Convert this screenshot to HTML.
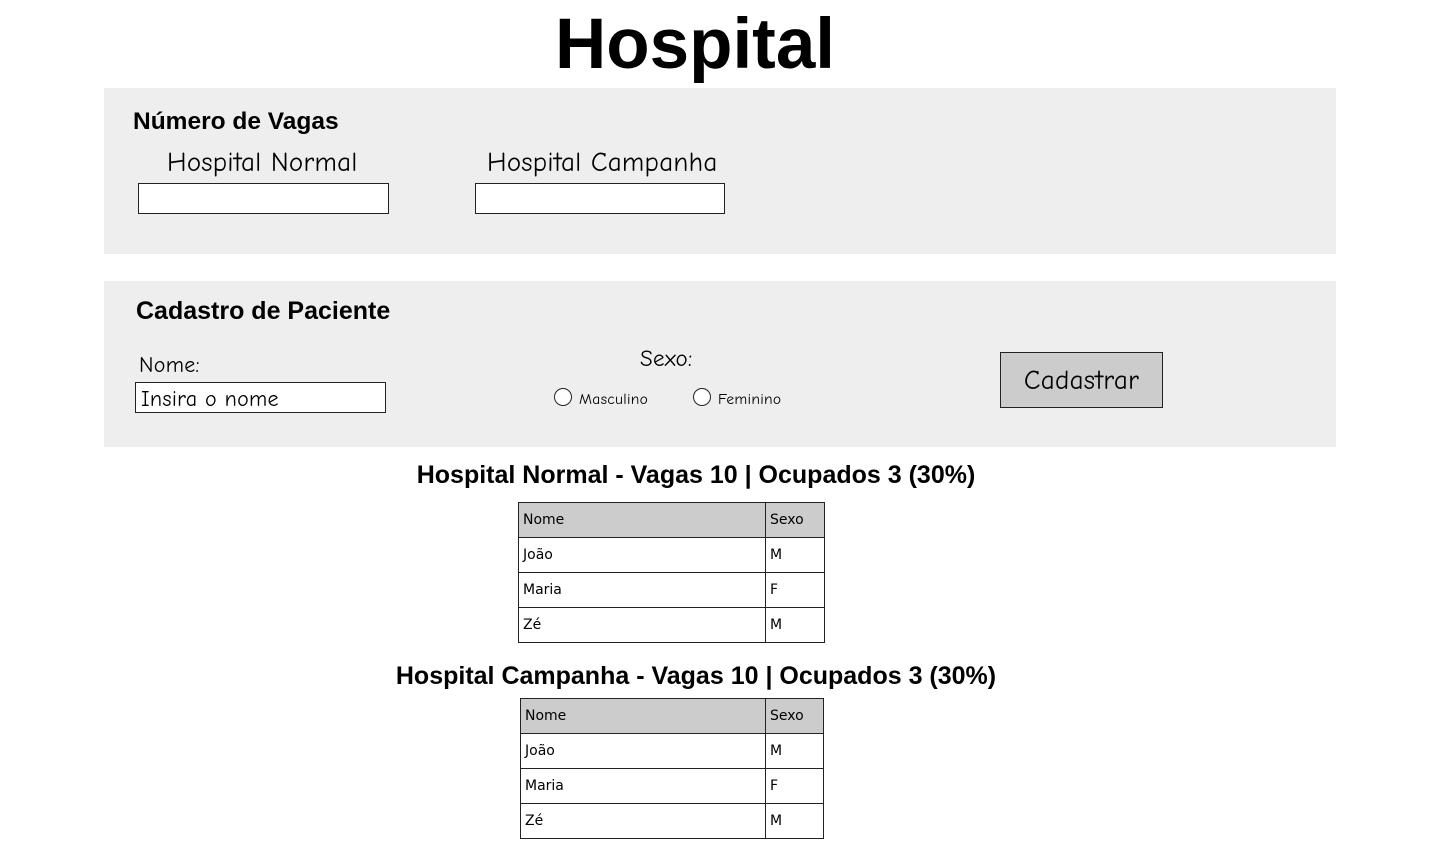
<!DOCTYPE html>
<html><head><meta charset="utf-8"><style>
body{margin:0;width:1450px;height:850px;background:#fff;position:relative;overflow:hidden;font-family:"Liberation Sans",sans-serif;color:#000}
.a{position:absolute;white-space:nowrap}
.h{font-family:"Comic Sans MS","Comic Neue","DejaVu Sans",sans-serif;letter-spacing:0.3px}
.panel{position:absolute;left:104px;width:1232px;height:166px;background:#eeeeee}
.inp{position:absolute;border:1.5px solid #222;background:#fff;box-sizing:border-box}
.b{font-weight:bold}
table{position:absolute;border-collapse:collapse;font-family:"Comic Sans MS","DejaVu Sans",sans-serif;font-size:14px}
td{border:1.5px solid #222;padding:0 4px;height:35px;box-sizing:border-box}
tr.hd td{background:#cccccc}
.rad{position:absolute;width:16px;height:16px;border:1.5px solid #222;border-radius:50%;background:#fff}
</style></head><body>
<div class="a b" style="left:0;width:1390px;text-align:center;top:4px;font-size:71px;line-height:82px">Hospital</div>

<div class="panel" style="top:88px"></div>
<div class="a b" style="left:133px;top:108px;font-size:24.5px">Número de Vagas</div>
<div class="a h" style="left:167px;top:147px;font-size:27px">Hospital Normal</div>
<div class="a h" style="left:487px;top:147px;font-size:27px">Hospital Campanha</div>
<div class="inp" style="left:138px;top:183px;width:251px;height:31px"></div>
<div class="inp" style="left:475px;top:183px;width:250px;height:31px"></div>

<div class="panel" style="top:281px"></div>
<div class="a b" style="left:136px;top:297px;font-size:25px">Cadastro de Paciente</div>
<div class="a h" style="left:139px;top:352px;font-size:22px">Nome:</div>
<div class="inp" style="left:135px;top:382px;width:251px;height:31px"></div>
<div class="a h" style="left:141px;top:386px;font-size:22px">Insira o nome</div>
<div class="a h" style="left:640px;top:345px;font-size:23px">Sexo:</div>
<div class="rad" style="left:554px;top:388px"></div>
<div class="a h" style="left:579px;top:390px;font-size:15.5px">Masculino</div>
<div class="rad" style="left:693px;top:388px"></div>
<div class="a h" style="left:718px;top:390px;font-size:15.5px">Feminino</div>
<div class="inp" style="left:1000px;top:352px;width:163px;height:56px;background:#cccccc"></div>
<div class="a h" style="left:1000px;width:163px;text-align:center;top:365px;font-size:27px">Cadastrar</div>

<div class="a b" style="left:0;width:1392px;text-align:center;top:461px;font-size:25px">Hospital Normal - Vagas 10 | Ocupados 3 (30%)</div>
<table style="left:518px;top:502px;width:307px">
<tr class="hd"><td style="width:247px">Nome</td><td>Sexo</td></tr>
<tr><td>João</td><td>M</td></tr>
<tr><td>Maria</td><td>F</td></tr>
<tr><td>Zé</td><td>M</td></tr>
</table>

<div class="a b" style="left:0;width:1392px;text-align:center;top:662px;font-size:25px">Hospital Campanha - Vagas 10 | Ocupados 3 (30%)</div>
<table style="left:520px;top:698px;width:304px">
<tr class="hd"><td style="width:245px">Nome</td><td>Sexo</td></tr>
<tr><td>João</td><td>M</td></tr>
<tr><td>Maria</td><td>F</td></tr>
<tr><td>Zé</td><td>M</td></tr>
</table>
</body></html>
